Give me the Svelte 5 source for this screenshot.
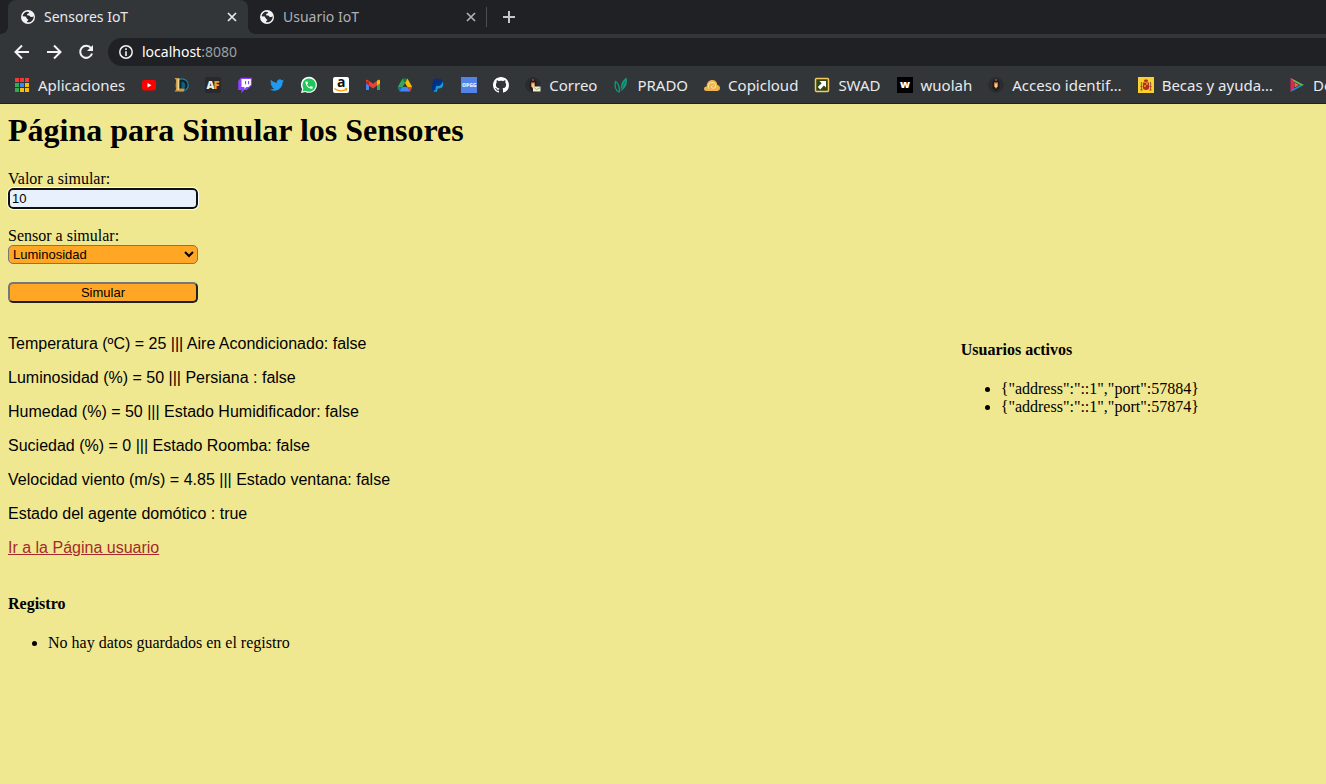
<script>
  const tabs = [
    { title: 'Sensores IoT', active: true },
    { title: 'Usuario IoT', active: false }
  ];

  const bookmarks = [
    { icon: 'apps', label: 'Aplicaciones' },
    { icon: 'youtube', name: 'YouTube' },
    { icon: 'lol', name: 'League of Legends' },
    { icon: 'af', name: 'AF' },
    { icon: 'twitch', name: 'Twitch' },
    { icon: 'twitter', name: 'Twitter' },
    { icon: 'whatsapp', name: 'WhatsApp' },
    { icon: 'amazon', name: 'Amazon' },
    { icon: 'gmail', name: 'Gmail' },
    { icon: 'drive', name: 'Drive' },
    { icon: 'paypal', name: 'PayPal' },
    { icon: 'opgg', name: 'OP.GG' },
    { icon: 'github', name: 'GitHub' },
    { icon: 'mail', label: 'Correo' },
    { icon: 'prado', label: 'PRADO' },
    { icon: 'cloud', label: 'Copicloud' },
    { icon: 'swad', label: 'SWAD' },
    { icon: 'wuolah', label: 'wuolah' },
    { icon: 'seal', label: 'Acceso identif…' },
    { icon: 'spain', label: 'Becas y ayuda…' },
    { icon: 'play', label: 'De' }
  ];

  const appColors = ['#f03b37', '#f03b37', '#f03b37', '#34a853', '#3b86f7', '#fbbc05', '#34a853', '#fbbc05', '#fbbc05'];

  const readings = [
    'Temperatura (ºC) = 25 ||| Aire Acondicionado: false',
    'Luminosidad (%) = 50 ||| Persiana : false',
    'Humedad (%) = 50 ||| Estado Humidificador: false',
    'Suciedad (%) = 0 ||| Estado Roomba: false',
    'Velocidad viento (m/s) = 4.85 ||| Estado ventana: false',
    'Estado del agente domótico : true'
  ];

  const users = ['{"address":"::1","port":57884}', '{"address":"::1","port":57874}'];

  let value = $state('10');
  let sensor = $state('Luminosidad');
</script>

{#snippet globe()}
  <svg class="icon" viewBox="0 0 16 16" aria-hidden="true">
    <circle cx="8" cy="8" r="7" fill="#f1f3f4" />
    <path fill="#292b2f" d="M2.6 7.2c.3-2 1.900-3.900 4-4.400l2.300.1c.2.800-.1 1.500-.900 1.700l-.8.5-.2 1.200 2 .2c.8.1 1.200.6 1.200 1.300l1.500.2c.900 0 1.600-.3 1.900-1 .4 2.900-1.400 5.600-4.300 6.300l-2.200-.1c-.2-.9.300-1.400 1-1.700l.1-1.300c-.8-.100-1.400-.5-1.600-1.300l-.9-1.500z" />
  </svg>
{/snippet}

{#snippet cross()}
  <svg class="icon" viewBox="0 0 16 16" aria-hidden="true">
    <path d="M4 4l8 8M12 4l-8 8" fill="none" stroke="currentColor" stroke-width="1.700" />
  </svg>
{/snippet}

{#snippet logo(kind)}
  <svg class="icon" viewBox="0 0 16 16" aria-hidden="true">
    {#if kind === 'apps'}
      {#each appColors as color, i}
        <rect x={1 + (i % 3) * 5} y={1 + Math.floor(i / 3) * 5} width="4" height="4" fill={color} />
      {/each}
    {:else if kind === 'youtube'}
      <rect x="1" y="3" width="14" height="10.500" rx="2.400" fill="#f00" />
      <path d="M6.500 6l4 2.200-4 2.200z" fill="#fff" />
    {:else if kind === 'lol'}
      <circle cx="9" cy="8" r="6.200" fill="#0b2230" stroke="#2a7f9b" stroke-width="1.200" />
      <path d="M8.500 4.500a4 4 0 0 1 3 6.500l-3 .5z" fill="#11617b" />
      <path d="M1.500 1h5v10.500H12L10.500 14.500h-9l1.500-2V3z" fill="#c69b4e" />
      <path d="M4.500 2h1.500v11H4.500z" fill="#efd28c" />
    {:else if kind === 'af'}
      <rect width="16" height="16" rx="2" fill="#292929" />
      <text x="1.500" y="12" font-size="11" font-weight="800" fill="#eee">A</text>
      <text x="8.500" y="12" font-size="11" font-weight="800" fill="#f39b2c">F</text>
    {:else if kind === 'twitch'}
      <path d="M4 .8L1.200 4v9h3.300v3l3-3h2.300L15 8.200V.8z" fill="#8f3fff" />
      <path d="M4.500 1.900h9.400v5.800L11.600 10H9.400l-2 2v-2H4.500z" fill="#fff" />
      <path d="M8 4h1.100v3.300H8zm3 0h1.100v3.300H11z" fill="#8f3fff" />
    {:else if kind === 'twitter'}
      <g transform="translate(1 1) scale(.583)">
        <path fill="#1d9bf0" d="M23.953 4.570a10 10 0 01-2.825.775 4.958 4.958 0 002.163-2.723c-.951.555-2.005.959-3.127 1.184a4.920 4.920 0 00-8.384 4.482C7.690 8.095 4.067 6.130 1.640 3.162a4.822 4.822 0 00-.666 2.475c0 1.710.870 3.213 2.188 4.096a4.904 4.904 0 01-2.228-.616v.060a4.923 4.923 0 003.946 4.827 4.996 4.996 0 01-2.212.085 4.936 4.936 0 004.604 3.417 9.867 9.867 0 01-6.102 2.105c-.390 0-.779-.023-1.170-.067a13.995 13.995 0 007.557 2.209c9.053 0 13.998-7.496 13.998-13.985 0-.210 0-.420-.015-.630A9.935 9.935 0 0024 4.590z" />
      </g>
    {:else if kind === 'whatsapp'}
      <path d="M0 16l1.100-4A8 8 0 1 1 4.200 14.900z" fill="#fff" />
      <path d="M1.500 14.500l.9-3.100A6.600 6.600 0 1 1 4.700 13.700z" fill="#1fc658" />
      <path transform="translate(3.300 3.300) scale(.4)" fill="#fff" d="M6.620 10.790c1.440 2.830 3.760 5.140 6.590 6.590l2.200-2.200c.270-.270.670-.360 1.020-.240 1.120.370 2.330.570 3.570.570.550 0 1 .450 1 1V20c0 .550-.450 1-1 1-9.390 0-17-7.610-17-17 0-.550.450-1 1-1h3.500c.550 0 1 .450 1 1 0 1.250.200 2.450.570 3.570.110.350.030.740-.250 1.020l-2.200 2.200z" />
    {:else if kind === 'amazon'}
      <rect width="16" height="16" rx="2" fill="#fff" />
      <text x="4" y="10" font-size="14" font-weight="700" fill="#111">a</text>
      <path d="M1.500 11.500c3.500 3 9 3 12 .8" fill="none" stroke="#f90" stroke-width="1.400" />
      <path d="M11.500 11.200l3-.2-.9 3z" fill="#f90" />
    {:else if kind === 'gmail'}
      <path d="M1 4.200V13h3V7z" fill="#4285f4" />
      <path d="M15 4.200V13h-3V7z" fill="#34a853" />
      <path d="M12 3.800l1.200-.9c.9-.5 1.800.2 1.800 1.100v2.400l-3 2.200z" fill="#fbbc04" />
      <path d="M1 4c0-1 1-1.600 1.800-1.100L8 6.800l4-3v4.800l-4 3-4-3-3-2.200z" fill="#ea4335" />
      <path d="M1 4.500L4 4v4.600L1 6.400z" fill="#c5221f" />
    {:else if kind === 'drive'}
      <path d="M5.500 1.500h5L8 6z" fill="#188038" />
      <path d="M5.500 1.500L8 6l-3.800 6.500-1.700 1.500L.8 10z" fill="#34a853" />
      <path d="M10.500 1.500L15.200 10h-4.700L8 6z" fill="#fbbc04" />
      <path d="M.8 10h4.700l-3 4.500z" fill="#1967d2" />
      <path d="M5.500 10h5l3 4.500h-11z" fill="#4285f4" />
      <path d="M10.500 10h4.700l-1.700 4z" fill="#ea4335" />
    {:else if kind === 'paypal'}
      <path d="M6 4.500h6.500c1.600.6 2 2 1.600 3.700-.5 2.200-2 3.200-4.200 3.200H8.600L8 14.800H4.800z" fill="#169bd7" />
      <path d="M4.500 1.800h5.500c2.700 0 3.600 1.500 3.100 3.700-.5 2.300-2.100 3.400-4.300 3.400H7l-.8 4.300H2.500z" fill="#003087" />
    {:else if kind === 'opgg'}
      <rect width="16" height="16" fill="#5383e8" />
      <text x="1" y="10" font-size="5" font-weight="800" fill="#e8efff">OPGG</text>
    {:else if kind === 'github'}
      <path fill="#fff" d="M8 0C3.580 0 0 3.580 0 8c0 3.540 2.290 6.530 5.470 7.590.400.070.550-.170.550-.380 0-.190-.010-.820-.010-1.490-2.010.370-2.530-.490-2.690-.940-.090-.230-.480-.940-.820-1.130-.280-.150-.680-.520-.010-.530.630-.010 1.080.580 1.230.820.720 1.210 1.870.870 2.330.660.070-.520.280-.870.510-1.070-1.780-.200-3.640-.890-3.640-3.950 0-.870.310-1.590.820-2.150-.080-.200-.360-1.020.080-2.120 0 0 .670-.210 2.200.820.640-.180 1.320-.270 2-.270s1.360.090 2 .270c1.530-1.040 2.200-.820 2.200-.820.440 1.100.160 1.920.080 2.120.510.560.820 1.270.820 2.150 0 3.070-1.870 3.750-3.650 3.950.290.250.540.730.540 1.480 0 1.070-.010 1.930-.010 2.200 0 .210.150.460.550.380A8.010 8.010 0 0016 8c0-4.420-3.580-8-8-8z" />
    {:else if kind === 'mail' || kind === 'seal'}
      <circle cx="8" cy="8" r="7.300" fill="#2a2c2f" stroke="#2c2a2b" />
      <path d="M4.500 4.500L8 1.500l3.500 3v7L8 14l-3.500-2.500z" fill="#211b1c" />
      <circle cx="8" cy="3" r="1" fill="#8c5a3a" />
      <path d="M6.200 5.500h3.600v3.800L8 11.800 6.200 9.300z" fill="#e89a55" />
      <path d="M7.300 7h1.400v3H7.300z" fill="#ffe0a8" />
      {#if kind === 'mail'}
        <path d="M8 9.500h7.500v5H8z" fill="#f4efc8" />
        <path d="M8.500 10l3 2.500 4-2" fill="none" stroke="#77a877" stroke-width=".8" />
      {/if}
    {:else if kind === 'prado'}
      <path d="M6 15C2.500 13.500 1.500 9 2.500 4.500c2.600 1.500 3.800 4 4 9z" fill="none" stroke="#0e9c7c" stroke-width="1.300" />
      <path d="M8 14C7 8 9 3.500 13.500.5c1.500 5.500-.5 10.500-5.500 13.500z" fill="#0e9c7c" />
      <path d="M8.500 13c1-4 2.500-6.500 4-9" fill="none" stroke="#323639" stroke-width=".6" />
    {:else if kind === 'cloud'}
      <path d="M2.500 14C.9 14 0 13 0 11.700c0-1.500 1.200-2.500 2.800-2.200C2.500 5.500 5 3 8.300 3c3.100 0 5 2 5 5 1.700.3 2.700 1.400 2.700 3 0 1.800-1.200 3-3 3z" fill="#eeb34c" />
      <path d="M4.500 11.500c-1-3.500 1-6 3.700-6 2.300 0 3.600 1.500 3.400 3.500-.2 1.700-1.500 2.600-2.800 2.300-1.500-.3-1.800-2.500-.2-3" fill="none" stroke="#fff0b8" stroke-width=".9" />
    {:else if kind === 'swad'}
      <rect x="1.500" y="1.500" width="13" height="13" rx="1" fill="#334719" stroke="#f5c860" stroke-width="1.500" />
      <path d="M5.500 4H12v6.500L9.900 8.400l-3.600 4-2.500-2.300 3.900-3.900z" fill="#fff" />
    {:else if kind === 'wuolah'}
      <rect width="16" height="16" fill="#000" />
      <text x="3" y="11" font-size="11" font-weight="800" fill="#fff">w</text>
    {:else if kind === 'spain'}
      <rect width="16" height="16" fill="#f8d12e" />
      <path d="M6 3.500C5.500 2 10.500 2 10 3.500L9.500 5h-3z" fill="#b23a22" />
      <path d="M5 5.500h6v5.500c0 2.600-6 2.600-6 0z" fill="#b52b20" />
      <path d="M8 6h2v2H8zM6 8h2v2H6z" fill="#d9892a" />
      <path d="M3.500 5v8M12.500 5v8" stroke="#a06a38" stroke-width="1.300" />
      <path d="M2.500 9.500h2M11.500 9.500h2M2.500 13h2M11.500 13h2" stroke="#b43a22" />
    {:else if kind === 'play'}
      <path d="M1.500 1L7 4v8l-5.500 3z" fill="#e5215c" />
      <path d="M1.500 1l13.500 7h-4L5 4.500z" fill="#62c554" />
      <path d="M15 8L1.500 15 5 11l5.500-3z" fill="#1c8fe0" />
      <path d="M5 5l6 3-6 3.500z" fill="#3a3130" />
      <path d="M5.500 5.500L10 8l-4.500 2.500z" fill="#f0682e" />
    {/if}
  </svg>
{/snippet}

<div class="window">
  <header class="browser">
    <div class="tabstrip">
      {#each tabs as tab}
        <div class="tab" class:active={tab.active}>
          {@render globe()}
          <span class="title">{tab.title}</span>
          <button class="plain" aria-label="Cerrar pestaña">{@render cross()}</button>
        </div>
      {/each}
      <span class="divider"></span>
      <button class="plain new" aria-label="Nueva pestaña">
        <svg class="icon" viewBox="0 0 16 16" aria-hidden="true">
          <path d="M8 2v12M2 8h12" fill="none" stroke="currentColor" stroke-width="2" />
        </svg>
      </button>
    </div>

    <div class="toolbar">
      <button class="plain" aria-label="Atrás">
        <svg class="icon" viewBox="0 0 16 16" aria-hidden="true">
          <path d="M15 8H2M8 1.500L1.500 8 8 14.500" fill="none" stroke="currentColor" stroke-width="2" />
        </svg>
      </button>
      <button class="plain" aria-label="Adelante">
        <svg class="icon" viewBox="0 0 16 16" aria-hidden="true">
          <path d="M1 8h13M8 1.500L14.500 8 8 14.500" fill="none" stroke="currentColor" stroke-width="2" />
        </svg>
      </button>
      <button class="plain" aria-label="Recargar">
        <svg class="icon" viewBox="0 0 16 16" aria-hidden="true">
          <path d="M13 4.200A6 6 0 1 0 14 9.500" fill="none" stroke="currentColor" stroke-width="2" />
          <path d="M15 1v6H9z" fill="currentColor" />
        </svg>
      </button>
      <div class="omnibox">
        <svg class="icon" viewBox="0 0 16 16" aria-hidden="true">
          <circle cx="8" cy="8" r="6.200" fill="none" stroke="#f1f3f4" stroke-width="1.500" />
          <path d="M7.200 7.200h1.600V12H7.200zM7.200 4.200h1.600v1.700H7.200z" fill="#f1f3f4" />
        </svg>
        <button class="address" aria-label="Dirección">localhost<span>:8080</span></button>
      </div>
    </div>

    <nav class="bookmarks" aria-label="Marcadores">
      {#each bookmarks as mark}
        <a href="#{mark.icon}" aria-label={mark.label ?? mark.name}>
          {@render logo(mark.icon)}
          {#if mark.label}<span>{mark.label}</span>{/if}
        </a>
      {/each}
    </nav>
  </header>

  <main>
    <h1>Página para Simular los Sensores</h1>
    <form onsubmit={(event) => event.preventDefault()}>
      <label for="value">Valor a simular:</label>
      <input id="value" type="text" bind:value />
      <label for="sensor">Sensor a simular:</label>
      <select id="sensor" bind:value={sensor}>
        <option>Temperatura</option>
        <option>Luminosidad</option>
        <option>Humedad</option>
        <option>Suciedad</option>
      </select>
      <button type="submit">Simular</button>
    </form>

    <div class="columns">
      <section class="readings">
        {#each readings as reading}
          <p>{reading}</p>
        {/each}
        <a href="#usuario">Ir a la Página usuario</a>
      </section>
      <section class="users">
        <h4>Usuarios activos</h4>
        <ul>
          {#each users as user}
            <li>{user}</li>
          {/each}
        </ul>
      </section>
    </div>

    <section class="log">
      <h4>Registro</h4>
      <ul>
        <li>No hay datos guardados en el registro</li>
      </ul>
    </section>
  </main>
</div>

<style>
  :global(body) {
    margin: 0;
    background: #f0e891;
  }

  .window {
    min-height: 100vh;
    color: #000;
    font: 16px/18px "Liberation Serif", serif;
  }

  .browser {
    background: #323639;
    color: #e8eaed;
    font: 15px/20px "Noto Sans", sans-serif;
    overflow: hidden;
  }

  .icon {
    display: block;
    flex: none;
    width: 16px;
    height: 16px;
    overflow: visible;
  }

  .icon text {
    font-family: "Open Sans", sans-serif;
  }

  .plain {
    display: grid;
    place-items: center;
    flex: none;
    padding: 0;
    border: 0;
    background: none;
    color: #f1f3f4;
  }

  .tabstrip {
    display: flex;
    align-items: center;
    height: 34px;
    padding-left: 8px;
    background: #202124;
  }

  .tab {
    display: flex;
    align-items: center;
    gap: 8px;
    box-sizing: border-box;
    width: 238px;
    height: 34px;
    padding: 0 7px 0 11px;
    color: #aeb1b5;
    font-size: 14px;
  }

  .tab.active {
    position: relative;
    width: 240px;
    padding: 0 8px 0 12px;
    border-radius: 8px 8px 0 0;
    background: #323639;
    color: #e8eaed;
  }

  /* Curved feet that join the active tab to the toolbar */
  .tab.active::before,
  .tab.active::after {
    position: absolute;
    bottom: 0;
    width: 8px;
    height: 8px;
    content: "";
  }

  .tab.active::before {
    right: 100%;
    background: radial-gradient(circle at 0 0, transparent 8px, #323639 8px);
  }

  .tab.active::after {
    left: 100%;
    background: radial-gradient(circle at 100% 0, transparent 8px, #323639 8px);
  }

  .tab .plain {
    color: inherit;
  }

  .title {
    flex: 1;
    white-space: nowrap;
  }

  .divider {
    width: 1px;
    height: 20px;
    background: #4c4e52;
  }

  .new {
    margin-left: 14px;
    color: #c4c7ca;
  }

  .toolbar {
    display: flex;
    align-items: center;
    gap: 16px;
    padding: 4px 0 0 14px;
  }

  .omnibox {
    display: flex;
    flex: 1;
    align-items: center;
    gap: 8px;
    height: 28px;
    margin-left: -2px;
    padding-left: 10px;
    border-radius: 14px 0 0 14px;
    background: #202124;
  }

  .address {
    padding: 0;
    border: 0;
    background: none;
    color: #fff;
    font: 14px/20px "Noto Sans", sans-serif;
  }

  .address span {
    color: #9aa0a6;
  }

  .bookmarks {
    display: flex;
    gap: 16px;
    height: 37px;
    padding: 0 14px;
    border-bottom: 1px solid #202124;
  }

  .bookmarks a {
    display: flex;
    flex: none;
    align-items: center;
    gap: 8px;
    color: inherit;
    text-decoration: none;
    white-space: nowrap;
  }

  main {
    padding: 8px;
  }

  h1 {
    margin: 0 0 21px;
    font-size: 32px;
    line-height: 37px;
  }

  form {
    display: flex;
    flex-direction: column;
    width: 190px;
  }

  form input,
  form select,
  form button {
    box-sizing: border-box;
    width: 100%;
    margin: 0 0 18px;
    border-radius: 5px;
    color: #000;
    font: 13px/15px "Liberation Sans", sans-serif;
  }

  form input {
    height: 21px;
    padding: 1px 2px;
    border: 2px solid #101010;
    outline: 1px solid #fff;
    background: #e8f0fe;
  }

  form select {
    height: 19px;
    border: 1px solid #767676;
    background-color: #ffa724;
  }

  form button {
    height: 21px;
    margin: 0;
    padding: 1px 6px;
    border: 2px outset #767676;
    background: #ffa724;
  }

  .columns {
    display: grid;
    grid-template-columns: 8fr 3fr;
    margin-top: 32px;
  }

  .readings {
    font-family: "Liberation Sans", sans-serif;
  }

  .readings p {
    margin: 0 0 16px;
  }

  .readings a {
    color: #a52a2a;
  }

  .users {
    padding-top: 6px;
  }

  .log {
    margin-top: 38px;
  }

  h4 {
    margin: 0 0 21px;
    font-size: 16px;
  }

  ul {
    margin: 0;
    padding-left: 40px;
  }
</style>
